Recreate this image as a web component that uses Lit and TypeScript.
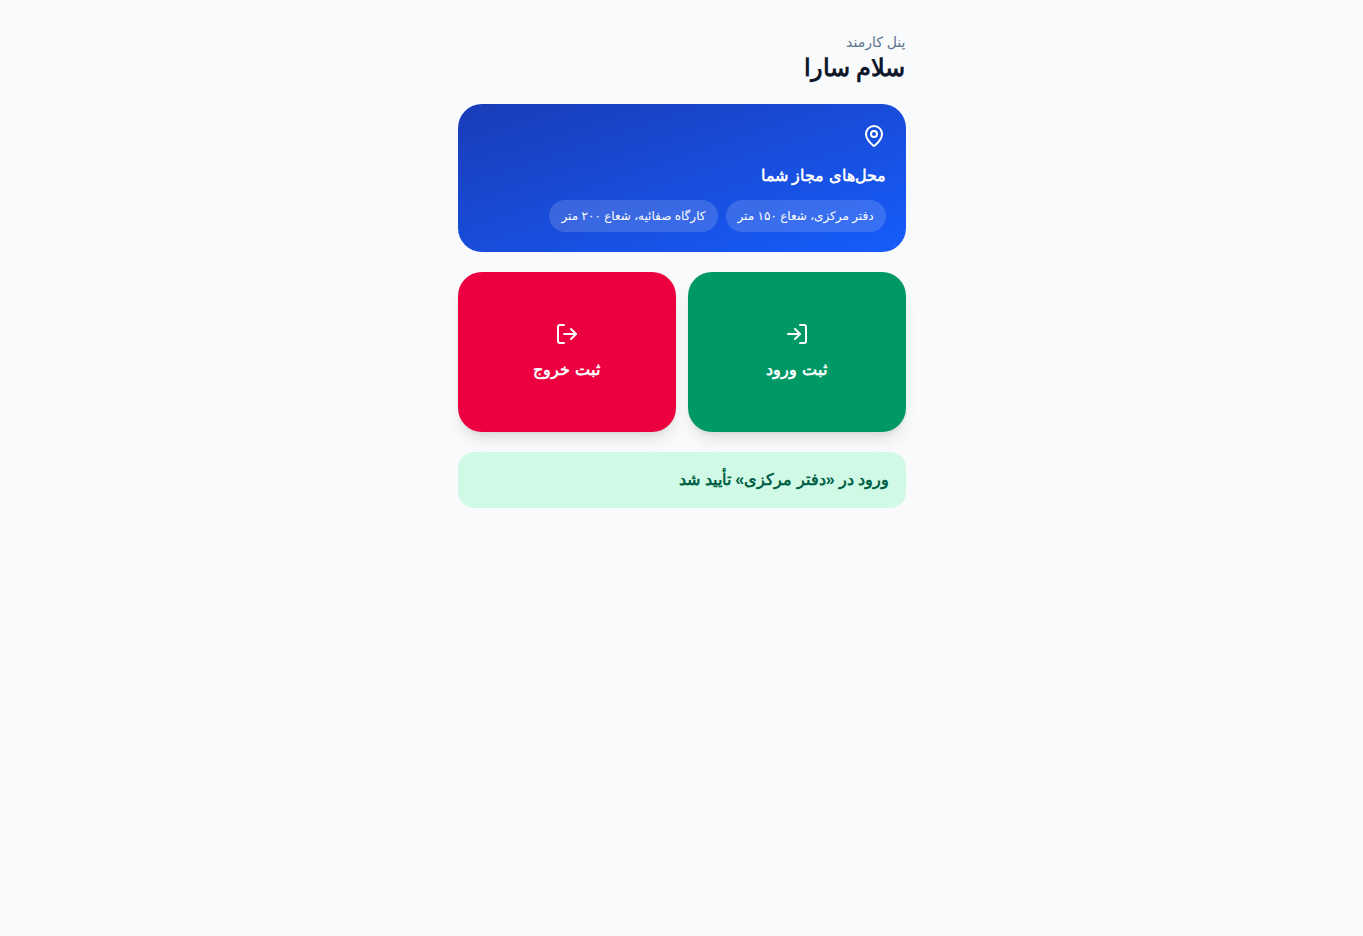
import { LitElement, html, css } from "lit";
import { customElement } from "lit/decorators.js";

@customElement("app-root")
export class AppRoot extends LitElement {
  static styles = css`
    :host {
      display: block;
      min-height: 100vh;
      background: #f8fafc;
      color: #0f172b;
      font-family: Tahoma, Arial, "Liberation Sans", sans-serif;
      font-size: 16px;
      line-height: 24px;
    }
    * { box-sizing: border-box; }
    h1, h2, p, ul { margin: 0; padding: 0; }
    .panel {
      display: flex;
      flex-direction: column;
      gap: 20px;
      max-width: 448px;
      margin: 0 auto;
      padding: 32px 0;
    }
    .eyebrow, .chip { font-family: Tahoma, Arial, "Liberation Sans", "DejaVu Sans", sans-serif; }
    .eyebrow { font-size: 14px; line-height: 20px; color: #62748e; }
    .greeting { font-size: 24px; line-height: 32px; font-weight: 700; }
    .places {
      padding: 20px;
      border-radius: 24px;
      color: #fff;
      background: linear-gradient(to bottom right in oklab, #193cb8, #155dfc);
    }
    .icon {
      display: block;
      width: 24px;
      height: 24px;
      fill: none;
      stroke: currentColor;
      stroke-width: 2;
      stroke-linecap: round;
      stroke-linejoin: round;
    }
    .title { margin-top: 16px; font-size: 16px; font-weight: 700; }
    .chips {
      display: flex;
      flex-wrap: wrap;
      gap: 8px;
      margin-top: 12px;
      list-style: none;
    }
    .chip {
      padding: 8px 12px;
      border-radius: 16px;
      background: rgb(255 255 255 / 15%);
      font-size: 12px;
      line-height: 16px;
    }
    .actions { display: grid; grid-template-columns: 1fr 1fr; gap: 12px; }
    .action {
      display: flex;
      flex-direction: column;
      align-items: center;
      justify-content: center;
      gap: 12px;
      min-height: 160px;
      padding: 0;
      border: 0;
      border-radius: 24px;
      color: #fff;
      font: inherit;
      font-weight: 700;
      cursor: pointer;
      box-shadow: 0 10px 15px -3px rgb(0 0 0 / 10%), 0 4px 6px -4px rgb(0 0 0 / 10%);
    }
    .enter { background: #009966; }
    .leave { background: #ec003f; }
    .notice {
      padding: 16px;
      border-radius: 16px;
      background: #d0fae5;
      color: #006045;
      font-weight: 700;
    }
  `;

  render() {
    return html`
      <main class="panel" dir="rtl" lang="fa">
        <header>
          <p class="eyebrow">پنل کارمند</p>
          <h1 class="greeting">سلام سارا</h1>
        </header>
        <section class="places">
          <svg class="icon" viewBox="0 0 24 24" aria-hidden="true">
            <path d="M20 10c0 4.993-5.539 10.193-7.399 11.799a1 1 0 0 1-1.202 0C9.539 20.193 4 14.993 4 10a8 8 0 0 1 16 0" />
            <circle cx="12" cy="10" r="3" />
          </svg>
          <h2 class="title">محل‌های مجاز شما</h2>
          <ul class="chips">
            <li class="chip">دفتر مرکزی، شعاع ۱۵۰ متر</li>
            <li class="chip">کارگاه صفائیه، شعاع ۲۰۰ متر</li>
          </ul>
        </section>
        <div class="actions">
          <button class="action enter" type="button">
            <svg class="icon" viewBox="0 0 24 24" aria-hidden="true">
              <path d="m10 17 5-5-5-5" />
              <path d="M15 12H3" />
              <path d="M15 3h4a2 2 0 0 1 2 2v14a2 2 0 0 1-2 2h-4" />
            </svg>
            <span>ثبت ورود</span>
          </button>
          <button class="action leave" type="button">
            <svg class="icon" viewBox="0 0 24 24" aria-hidden="true">
              <path d="m16 17 5-5-5-5" />
              <path d="M21 12H9" />
              <path d="M9 21H5a2 2 0 0 1-2-2V5a2 2 0 0 1 2-2h4" />
            </svg>
            <span>ثبت خروج</span>
          </button>
        </div>
        <p class="notice" role="status">ورود در «دفتر مرکزی» تأیید شد</p>
      </main>
    `;
  }
}
